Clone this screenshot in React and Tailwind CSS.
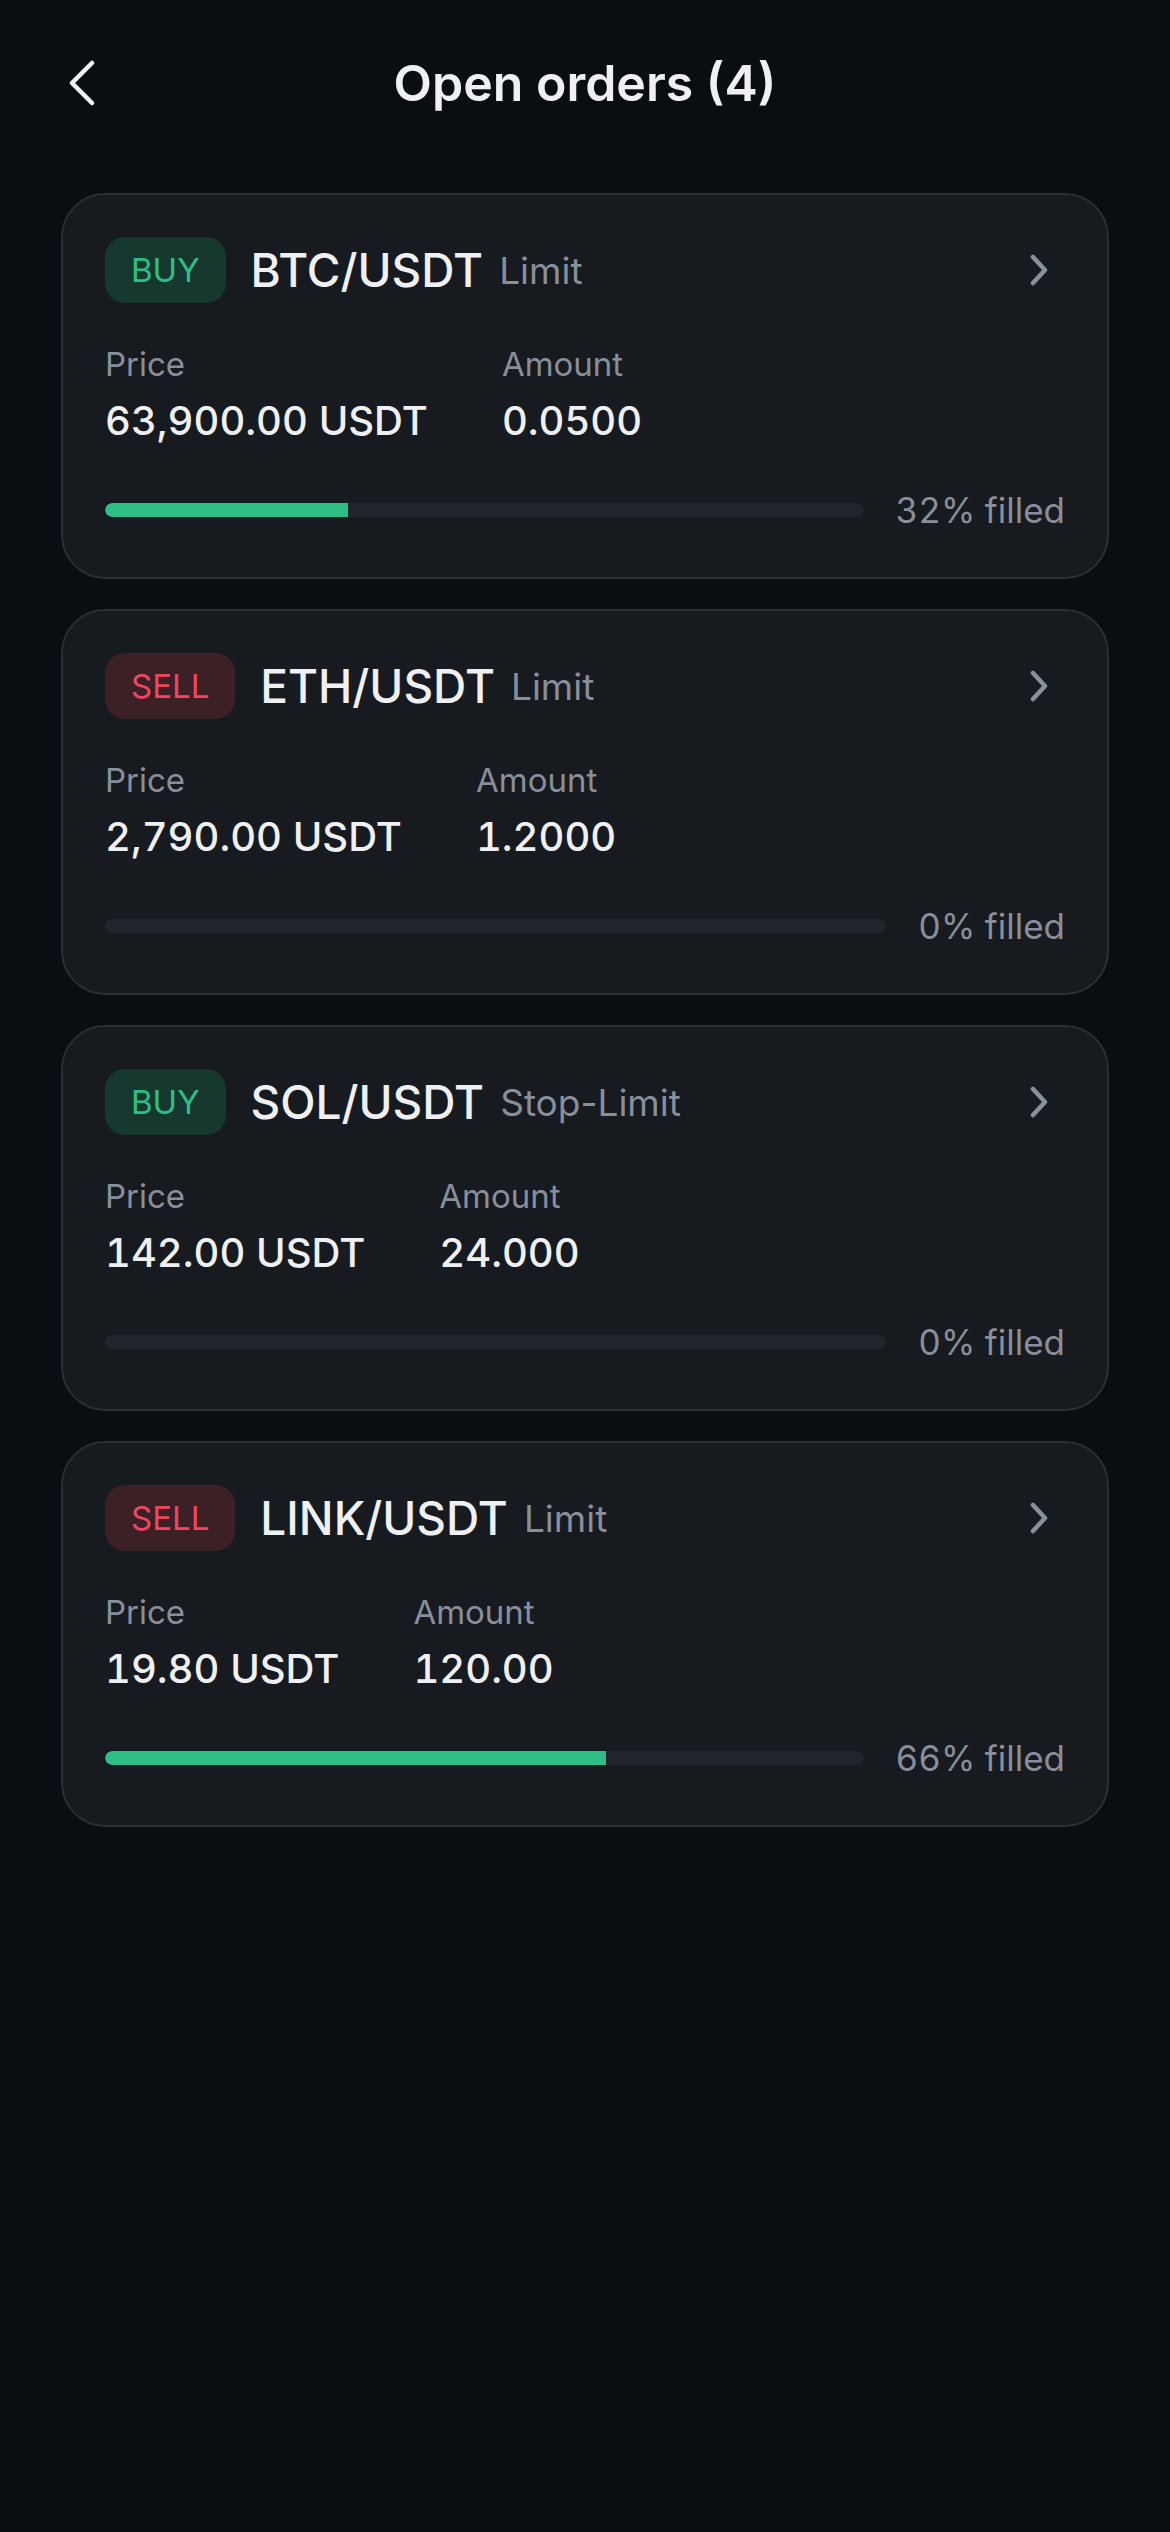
import React from 'react';

const orders = [
  { side: 'BUY', pair: 'BTC/USDT', type: 'Limit', price: '63,900.00 USDT', amount: '0.0500', filled: 32 },
  { side: 'SELL', pair: 'ETH/USDT', type: 'Limit', price: '2,790.00 USDT', amount: '1.2000', filled: 0 },
  { side: 'BUY', pair: 'SOL/USDT', type: 'Stop-Limit', price: '142.00 USDT', amount: '24.000', filled: 0 },
  { side: 'SELL', pair: 'LINK/USDT', type: 'Limit', price: '19.80 USDT', amount: '120.00', filled: 66 },
];

function ChevronLeft() {
  return (
    <svg width="32" height="46" viewBox="0 0 32 46" fill="none">
      <path d="M26 3 L6 23 L26 43" stroke="#f1f3f6" strokeWidth="4.5" strokeLinecap="round" strokeLinejoin="round" />
    </svg>
  );
}

function ChevronRight() {
  return (
    <svg width="20" height="32" viewBox="0 0 20 32" fill="none">
      <path d="M4 3 L16 16 L4 29" stroke="#8a919c" strokeWidth="4.5" strokeLinecap="round" strokeLinejoin="round" />
    </svg>
  );
}

function OrderCard({ order }) {
  const isBuy = order.side === 'BUY';
  return (
    <div className="rounded-[44px] border-2 border-[#2a2f37] bg-[#171a1f] px-[42px] pt-[42px] pb-[46px]">
      {/* top row */}
      <div className="flex items-center h-[66px]">
        <span
          className={
            isBuy
              ? 'flex items-center justify-center h-[66px] px-[26px] rounded-[20px] bg-[#17382e] text-[#2ebd85] text-[33px] leading-none'
              : 'flex items-center justify-center h-[66px] px-[26px] rounded-[20px] bg-[#3b2026] text-[#f0455e] text-[33px] leading-none'
          }
        >
          {order.side}
        </span>
        <span className="ml-[25px] text-[46px] font-medium text-[#eef0f3] leading-none">{order.pair}</span>
        <span className="ml-[16px] text-[37px] text-[#878f9b] leading-none">{order.type}</span>
        <span className="ml-auto mr-[16px] flex items-center">
          <ChevronRight />
        </span>
      </div>

      {/* price / amount */}
      <div className="flex gap-[74px] mt-[41px]">
        <div className="flex flex-col">
          <span className="text-[33px] leading-[40px] text-[#878f9b]">Price</span>
          <span className="mt-[12px] text-[40px] leading-[50px] font-medium tabular-nums text-[#eef0f3]">{order.price}</span>
        </div>
        <div className="flex flex-col">
          <span className="text-[33px] leading-[40px] text-[#878f9b]">Amount</span>
          <span className="mt-[12px] text-[40px] leading-[50px] font-medium tabular-nums text-[#eef0f3]">{order.amount}</span>
        </div>
      </div>

      {/* progress */}
      <div className="flex items-center gap-[32px] mt-[43px] h-[42px]">
        <div className="flex-1 h-[14px] rounded-full bg-[#20242b] overflow-hidden">
          <div className="h-full rounded-l-full bg-[#2ebd85]" style={{ width: `${order.filled}%` }} />
        </div>
        <span className="text-[35px] leading-[42px] tabular-nums text-[#878f9b]">{order.filled}% filled</span>
      </div>
    </div>
  );
}

export default function App() {
  return (
    <div
      className="min-h-[2532px] w-full bg-[#0a0d11]"
      style={{ fontFamily: 'Inter, "Noto Sans", sans-serif' }}
    >
      {/* header */}
      <div className="relative flex items-center justify-center h-[166px]">
        <button className="absolute left-[66px] top-[60px]">
          <ChevronLeft />
        </button>
        <h1 className="text-[50px] font-semibold text-[#eef0f3] leading-none">Open orders (4)</h1>
      </div>

      <div className="flex flex-col gap-[30px] px-[61px] pt-[27px]">
        {orders.map((o) => (
          <OrderCard key={o.pair} order={o} />
        ))}
      </div>
    </div>
  );
}
